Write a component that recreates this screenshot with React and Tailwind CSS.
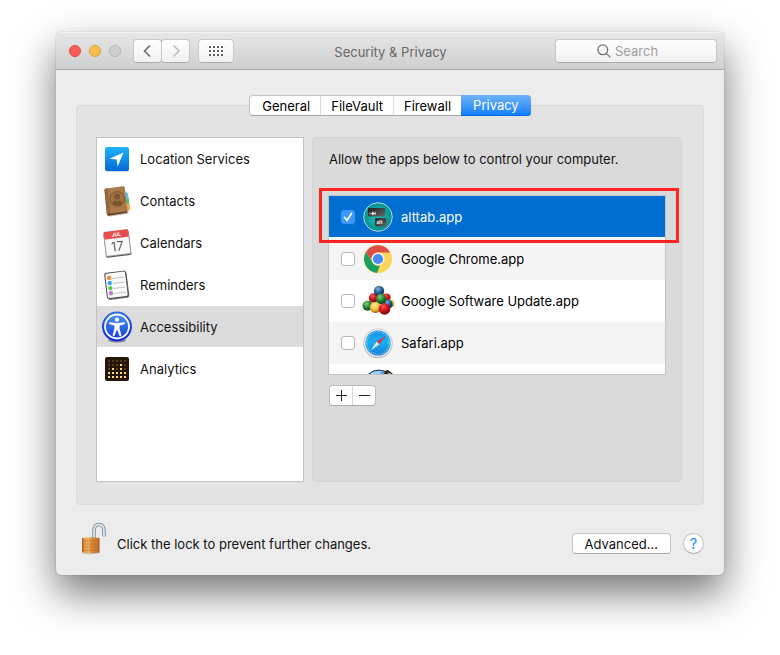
import React, { useState } from "react";

const LocationIcon = () => (
  <svg width="32" height="32" viewBox="0 0 32 32">
    <defs>
      <linearGradient id="loc" x1="0" y1="0" x2="0" y2="1">
        <stop offset="0" stopColor="#1fb4f7" />
        <stop offset="1" stopColor="#0468d8" />
      </linearGradient>
    </defs>
    <rect x="4" y="5" width="24" height="24" rx="2" fill="#000" opacity=".15" />
    <rect x="4" y="4" width="24" height="24" rx="2" fill="url(#loc)" />
    <path d="M22.500 9.500 8.500 15.800l7.200.7.900 7z" fill="#fff" />
  </svg>
);

const ContactsIcon = () => (
  <svg width="32" height="32" viewBox="0 0 32 32">
    <path d="M24 5.500 26.500 8l2.600 18-4 2z" fill="#e8e4dc" />
    <path d="M24.500 6.500l2.500 2 .5 4.500-3 .5z" fill="#5bb8e8" />
    <path d="M25 13.500l2.700-.5.700 5.500-3 .5z" fill="#4dbb7c" />
    <path d="M25.500 19l3-.5.600 6-3 1.500z" fill="#f0a840" />
    <path d="M7 30.500l20-3.200.500 1.200L9 31.500z" fill="#000" opacity=".3" />
    <path d="M3.500 5.500Q3 3.800 5 3.500L22 1.200q1.500-.2 1.700 1.200L26.500 26q.2 1.500-1.300 1.800L8 30.500q-1.800.3-2.200-1.500z" fill="#a9794a" />
    <path d="M3.500 5.500Q3 3.800 5 3.500l1.500-.3L9.500 30.200l-1.500.3q-1.800.3-2.200-1.500z" fill="#94673e" />
    <path d="M6.500 29l20-2.800q0 1.300-.8 1.600L8 30.500q-1 .2-1.500-1.500z" fill="#5d3c1d" />
    <circle cx="16.300" cy="14" r="7.300" fill="#a37345" stroke="#7d552f" strokeWidth="1" />
    <circle cx="16.200" cy="11.700" r="2.900" fill="#7d552f" />
    <path d="M10.800 18q1.200-2 3.700-2.500 1.700 1 3.400 0 2.800.2 4.100 1.700-2 3.600-5.700 3.600-3.500 0-5.500-2.800z" fill="#7d552f" />
  </svg>
);

const CalendarIcon = () => (
  <svg width="32" height="32" viewBox="0 0 32 32">
    <g transform="rotate(-7 16 16)">
      <rect x="3.500" y="5" width="25.500" height="24.500" rx="1.500" fill="#5c5c5c" />
      <rect x="4" y="4" width="24.500" height="24" rx="1" fill="#f9f9f9" stroke="#9a9a9a" strokeWidth=".6" />
      <rect x="4" y="3.500" width="24.500" height="7.500" rx="1" fill="#ea4b4d" />
      <text x="16.300" y="9.300" fontSize="5" fontWeight="700" fontFamily="Inter, sans-serif" fill="#fff" textAnchor="middle">JUL</text>
      <text x="16" y="24" fontSize="13" fontWeight="300" fontFamily="Inter, sans-serif" fill="#333" textAnchor="middle">17</text>
    </g>
  </svg>
);

const RemindersIcon = () => (
  <svg width="32" height="32" viewBox="0 0 32 32">
    <g transform="rotate(-7 16 16)">
      <rect x="5.500" y="4" width="21.500" height="26" rx="2" fill="#777" />
      <rect x="5" y="3" width="21" height="25.500" rx="2" fill="#fafafa" stroke="#4a4a4a" strokeWidth="1" />
      <path d="M12 9h12M12 14h12M12 19h12M12 24h12" stroke="#b9b9b9" strokeWidth=".8" />
      <circle cx="9" cy="8" r="2.200" fill="#f58a3c" />
      <circle cx="9" cy="13.200" r="2.200" fill="#28a8ee" />
      <circle cx="9" cy="18.400" r="2.200" fill="#5ccf5a" />
      <circle cx="9" cy="23.500" r="2.200" fill="#c07ad8" />
    </g>
  </svg>
);

const AccessibilityIcon = () => (
  <svg width="32" height="32" viewBox="0 0 32 32">
    <defs>
      <linearGradient id="acc" x1="0" y1="0" x2="0" y2="1">
        <stop offset="0" stopColor="#2f6fe0" />
        <stop offset="1" stopColor="#0b22d6" />
      </linearGradient>
      <linearGradient id="acc2" x1="0" y1="0" x2="0" y2="1">
        <stop offset="0" stopColor="#4b93f0" />
        <stop offset="1" stopColor="#1740dd" />
      </linearGradient>
    </defs>
    <ellipse cx="16" cy="29.500" rx="9" ry="2" fill="#000" opacity=".35" />
    <circle cx="16" cy="15.500" r="15" fill="url(#acc)" />
    <circle cx="16" cy="15.500" r="12" fill="url(#acc2)" stroke="#fff" strokeWidth="1.800" />
    <circle cx="16" cy="8.700" r="2.100" fill="#fff" />
    <path d="M9 11.300q7 1.400 14 0 1 .1 1 1 0 .7-.8.900L18.600 14.500v3.200l1.700 6.300q.1 1-.8 1.200-.8.100-1.100-.7L16.300 19h-.6l-2.100 5.500q-.3.800-1.100.7-.9-.2-.8-1.200l1.700-6.300v-3.200l-4.600-1.300q-.8-.2-.8-.9 0-.9 1-1z" fill="#fff" />
  </svg>
);

// lit dots per column, counted from the bottom
const LIT = [2, 3, 2, 4, 2];

const AnalyticsIcon = () => (
  <svg width="32" height="32" viewBox="0 0 32 32">
    <rect x="4" y="4" width="24" height="24" rx="2" fill="#231609" />
    {LIT.map((lit, c) =>
      [0, 1, 2, 3, 4].map((r) => (
        <rect key={`${c}-${r}`} x={7 + c * 4} y={7 + r * 4} width="2" height="2" fill={5 - r <= lit ? "#ffd872" : "#5b3a16"} />
      ))
    )}
  </svg>
);

const AltTabIcon = () => (
  <svg width="32" height="32" viewBox="0 0 32 32">
    <defs>
      <radialGradient id="alt">
        <stop offset="0" stopColor="#12c4bd" />
        <stop offset="1" stopColor="#0a8f8c" />
      </radialGradient>
      <linearGradient id="key" x1="0" y1="0" x2="1" y2="1">
        <stop offset="0" stopColor="#222" />
        <stop offset="1" stopColor="#666" />
      </linearGradient>
    </defs>
    <circle cx="16" cy="16" r="14.300" fill="url(#alt)" stroke="#b6dce6" strokeWidth="1" />
    <rect x="6" y="7" width="17" height="8.500" rx="1" fill="url(#key)" />
    <path d="M7.500 12.500h4M10.500 11.200l2.200 1.300-2.200 1.300zM13.300 11v3" stroke="#fff" strokeWidth=".7" fill="#fff" />
    <rect x="13" y="17" width="11.500" height="8.500" rx="1" fill="url(#key)" />
    <text x="17.500" y="22.500" fontSize="5" fontWeight="600" fontFamily="Inter, sans-serif" fill="#fff" textAnchor="middle">alt</text>
  </svg>
);

const ChromeIcon = () => (
  <svg width="32" height="32" viewBox="0 0 32 32">
    <circle cx="16" cy="16" r="14" fill="#fcd45a" />
    <path d="M3.900 9A14 14 0 0 1 28.200 9.500H16a6.500 6.500 0 0 0-5.900 9z" fill="#dd4f43" />
    <path d="M3.900 9l6.400 10.300A6.500 6.500 0 0 0 18 22.200L15 30A14 14 0 0 1 3.900 9z" fill="#1a9f5c" />
    <circle cx="16" cy="16" r="6.500" fill="#f5f5f5" />
    <circle cx="16" cy="16" r="5.100" fill="#4a8af4" />
  </svg>
);

const balls = [
  [24.500, 12.500, 4, "red"],
  [28, 18.500, 4, "yellow"],
  [26, 19, 4.500, "blue"],
  [11.500, 13, 4.700, "red"],
  [17, 6, 5.200, "blue"],
  [19, 14, 5.200, "green"],
  [5.500, 20.800, 5, "green"],
  [13.500, 22.500, 5.500, "yellow"],
  [22.500, 24, 5.800, "red"],
];

const SoftwareUpdateIcon = () => (
  <svg width="32" height="32" viewBox="0 0 32 32">
    <defs>
      <radialGradient id="red" cx=".4" cy=".3" r=".7"><stop offset="0" stopColor="#ff5a5a" /><stop offset=".5" stopColor="#d4141b" /><stop offset="1" stopColor="#6e0508" /></radialGradient>
      <radialGradient id="blue" cx=".4" cy=".3" r=".7"><stop offset="0" stopColor="#7ab4dc" /><stop offset=".5" stopColor="#28669a" /><stop offset="1" stopColor="#0b2a48" /></radialGradient>
      <radialGradient id="green" cx=".4" cy=".3" r=".7"><stop offset="0" stopColor="#83d083" /><stop offset=".5" stopColor="#2e8b36" /><stop offset="1" stopColor="#0d3d13" /></radialGradient>
      <radialGradient id="yellow" cx=".4" cy=".3" r=".7"><stop offset="0" stopColor="#ffec94" /><stop offset=".6" stopColor="#f2bd34" /><stop offset="1" stopColor="#9a6a10" /></radialGradient>
    </defs>
    {balls.map(([x, y, r, color], i) => (
      <circle key={i} cx={x} cy={y} r={r} fill={`url(#${color})`} />
    ))}
  </svg>
);

const SafariIcon = () => (
  <svg width="32" height="32" viewBox="0 0 32 32">
    <defs>
      <linearGradient id="saf" x1="0" y1="0" x2="0" y2="1">
        <stop offset="0" stopColor="#1c8fe8" />
        <stop offset=".5" stopColor="#18b0f0" />
        <stop offset="1" stopColor="#1679d8" />
      </linearGradient>
    </defs>
    <circle cx="16" cy="16.800" r="14.500" fill="#000" opacity=".25" />
    <circle cx="16" cy="16" r="14.300" fill="#efefef" stroke="#bbb" strokeWidth=".6" />
    <circle cx="16" cy="16" r="12.600" fill="url(#saf)" />
    <circle cx="16" cy="16" r="11.200" fill="none" stroke="#d6efff" strokeWidth="1.400" strokeDasharray=".7 1.300" opacity=".75" />
    <path d="M23.500 9 17.300 17.300 14.700 14.700z" fill="#e8302c" />
    <path d="M8.800 23.300 14.700 14.700l2.600 2.600z" fill="#f4f4f4" />
  </svg>
);

const GlobeIcon = () => (
  <svg width="32" height="32" viewBox="0 0 32 32">
    <circle cx="17" cy="17.500" r="15.500" fill="#57a9df" stroke="#1d3a55" strokeWidth="1" />
    <path d="M9 5q5-2.500 11-2l-3 4-6 1z" fill="#9ed2f2" />
    <path d="M22 6q1-4 4-4l5 4v5z" fill="#2b2119" />
    <path d="M25 4.500l4 1v4z" fill="#c9a678" />
  </svg>
);

const LockIcon = () => (
  <svg width="26" height="34" viewBox="0 0 26 34">
    <defs>
      <linearGradient id="lock" x1="0" y1="0" x2="1" y2="0">
        <stop offset="0" stopColor="#a9571a" />
        <stop offset=".15" stopColor="#e9a052" />
        <stop offset=".4" stopColor="#f0b062" />
        <stop offset=".55" stopColor="#d98a3e" />
        <stop offset=".9" stopColor="#c8762e" />
        <stop offset="1" stopColor="#94501a" />
      </linearGradient>
    </defs>
    <path d="M14 18V10.500q0-7 5-7t5 7.500v4.500" fill="none" stroke="#77848e" strokeWidth="3.400" />
    <path d="M14 18V10.500q0-7 5-7t5 7.500v4.500" fill="none" stroke="#dfe7ec" strokeWidth="1.800" />
    <path d="M3 32q8 2 16-1v1q-8 2-15.500.5z" fill="#000" opacity=".4" />
    <path d="M2 17q9-1.500 17.500 0v14.500q-9 1.500-17.500 0z" fill="url(#lock)" />
    <path d="M2.500 20h16.500M2.500 23h16.500M2.500 26h16.500M2.500 29h16.500" stroke="#a85f1e" strokeWidth=".8" opacity=".6" />
  </svg>
);

const services = [
  { name: "Location Services", Icon: LocationIcon },
  { name: "Contacts", Icon: ContactsIcon },
  { name: "Calendars", Icon: CalendarIcon },
  { name: "Reminders", Icon: RemindersIcon },
  { name: "Accessibility", Icon: AccessibilityIcon },
  { name: "Analytics", Icon: AnalyticsIcon },
];

const apps = [
  { name: "alttab.app", Icon: AltTabIcon },
  { name: "Google Chrome.app", Icon: ChromeIcon },
  { name: "Google Software Update.app", Icon: SoftwareUpdateIcon },
  { name: "Safari.app", Icon: SafariIcon },
];

const tabs = ["General", "FileVault", "Firewall", "Privacy"];

const toolButton = "h-6 flex items-center justify-center rounded bg-linear-to-b from-white to-[#f1f1f1] border border-[#c6c6c6] border-b-[#adadad]";

const TitleBar = () => (
  <header className="grid grid-cols-[1fr_auto_1fr] items-center h-[38px] pl-2 pr-[7px] rounded-t-[5px] bg-linear-to-b from-[#e7e7e7] to-[#cfcfcf] border-t border-t-[#f4f4f4] border-b border-b-[#a9a9a9]">
    <div className="flex items-center">
      <div className="flex gap-2 pl-[5px]">
        <button aria-label="Close" className="w-3 h-3 rounded-full bg-[#fc5b57] border border-[#df4744]" />
        <button aria-label="Minimize" className="w-3 h-3 rounded-full bg-[#fdbc4e] border border-[#de9f35]" />
        <button aria-label="Zoom" disabled className="w-3 h-3 rounded-full bg-[#cfcfcf] border border-[#b5b5b5]" />
      </div>
      <div className="flex ml-3">
        <button aria-label="Back" className={`w-[29px] ${toolButton}`}>
          <svg width="10" height="14" viewBox="0 0 10 14" fill="none" stroke="#6a6a6a" strokeWidth="1.600"><path d="M7 1.500 1.500 7 7 12.500" /></svg>
        </button>
        <button aria-label="Forward" disabled className={`w-[29px] -ml-px ${toolButton}`}>
          <svg width="10" height="14" viewBox="0 0 10 14" fill="none" stroke="#bdbdbd" strokeWidth="1.600"><path d="M2.500 1.500 8 7 2.500 12.500" /></svg>
        </button>
      </div>
      <button aria-label="Show All" className={`w-9 ml-2 ${toolButton}`}>
        <svg width="14" height="10" viewBox="0 0 14 10" fill="#5c5c5c">
          {[0, 4, 8].map((y) => [0, 4, 8, 12].map((x) => <rect key={`${x}-${y}`} x={x} y={y} width="2" height="2" />))}
        </svg>
      </button>
    </div>
    <h1 className="pt-0.5 text-[#666]">Security &amp; Privacy</h1>
    <label className={`w-[162px] justify-self-end gap-1 ${toolButton}`}>
      <svg width="14" height="14" viewBox="0 0 14 14" fill="none" stroke="#6e6e6e" strokeWidth="1.200">
        <circle cx="5.800" cy="5.800" r="4.900" />
        <path d="M9.300 9.300 13.300 13.300" />
      </svg>
      <input type="search" aria-label="Search" placeholder="Search" className="w-15 bg-transparent outline-none placeholder:text-[#a0a0a0]" />
    </label>
  </header>
);

const Tabs = ({ active, onChange }) => (
  <div className="relative flex justify-center">
    <div className="flex h-[21px] rounded bg-white border border-[#c4c4c4] border-b-[#a8a8a8]">
      {tabs.map((t) => (
        <button key={t} onClick={() => onChange(t)}
          className={t === active
            ? "-my-px -mr-px px-3 rounded-r bg-linear-to-b from-[#6cb3f7] to-[#0a7ffb] border-b border-[#0a6ae0] text-white"
            : "px-[10px] text-black border-l border-[#dcdcdc] first:border-l-0 first:pl-3"}>
          {t}
        </button>
      ))}
    </div>
  </div>
);

const Sidebar = ({ active, onChange }) => (
  <ul className="w-[208px] shrink-0 bg-white border border-[#c3c3c3]">
    {services.map(({ name, Icon }) => (
      <li key={name} className="h-[42px] pb-px">
        <button onClick={() => onChange(name)}
          className={`w-full h-full flex items-center gap-[7px] pl-1 text-[#111] ${name === active ? "bg-[#dcdcdc]" : ""}`}>
          <Icon />
          {name}
        </button>
      </li>
    ))}
  </ul>
);

const AppRow = ({ name, Icon, selected, checked, onCheck }) => (
  <li className={`h-[42px] ${selected ? "bg-white pb-px" : "odd:bg-white even:bg-[#f4f4f4]"}`}>
    <label className={`h-full flex items-center pl-3 ${selected ? "bg-[#006dd1] text-white" : "text-black"}`}>
      <span className="grid place-items-center">
        <input type="checkbox" checked={checked} onChange={onCheck}
          className="peer col-start-1 row-start-1 appearance-none w-[14px] h-[14px] rounded-[3px] bg-white border border-[#b5b5b5] checked:bg-[#3b99fc] checked:border-[#3b99fc]" />
        <svg width="10" height="10" viewBox="0 0 10 10" fill="none" stroke="#fff" strokeWidth="1.700" strokeLinecap="round"
          className="col-start-1 row-start-1 pointer-events-none invisible peer-checked:visible">
          <path d="M1.500 5.500 4 8.300 8.500 1.500" />
        </svg>
      </span>
      <span className="mx-[7px]"><Icon /></span>
      {name}
    </label>
  </li>
);

const App = () => {
  const [tab, setTab] = useState("Privacy");
  const [service, setService] = useState("Accessibility");
  const [checked, setChecked] = useState({ "alttab.app": true });

  const toggle = (name) => setChecked((c) => ({ ...c, [name]: !c[name] }));

  return (
    <div className="min-h-screen bg-white px-14 pt-8 pb-20 font-[Inter,'Liberation_Sans',sans-serif] text-[13px] leading-4">
      <div className="rounded-[5px] bg-[#ececec] shadow-[0_0_1px_rgba(0,0,0,0.5),0_18px_40px_rgba(0,0,0,0.55)]">
        <TitleBar />

        <main className="px-5 pt-[25px]">
          <Tabs active={tab} onChange={setTab} />

          {/* Group box, starts behind the tabs */}
          <section className="-mt-[11px] flex gap-2 pl-[19px] pr-[21px] pt-[31px] pb-[22px] rounded bg-[#e3e3e3] border border-[#d9d9d9]">
            <Sidebar active={service} onChange={setService} />

            <div className="flex-1 min-w-0 min-h-[345px] px-[15px] pt-[13px] rounded bg-[#dadada] border border-[#d4d4d4]">
              <p className="ml-px text-[#111]">Allow the apps below to control your computer.</p>
              <div className="relative mt-7">
                <ul className="h-[180px] overflow-hidden bg-white border border-[#c3c3c3]">
                  {apps.map(({ name, Icon }) => (
                    <AppRow key={name} name={name} Icon={Icon} selected={name === "alttab.app"}
                      checked={!!checked[name]} onCheck={() => toggle(name)} />
                  ))}
                  <li className="pl-[33px] pt-1" aria-hidden="true"><GlobeIcon /></li>
                </ul>
                <div className="absolute -top-[7px] -left-[9px] -right-[13px] h-[55px] border-3 border-[#ff2420] pointer-events-none" />
              </div>
              <div className="inline-flex mt-[10px] h-[21px] ml-px rounded bg-white border border-[#bdbdbd] border-b-[#a8a8a8]">
                <button aria-label="Add" className="w-[23px] flex items-center justify-center border-r border-[#d5d5d5]">
                  <svg width="11" height="11" stroke="#222" strokeWidth="1"><path d="M0 5.500h11M5.500 0v11" /></svg>
                </button>
                <button aria-label="Remove" className="w-[22px] flex items-center justify-center">
                  <svg width="11" height="11" stroke="#222" strokeWidth="1"><path d="M0 5.500h11" /></svg>
                </button>
              </div>
            </div>
          </section>
        </main>

        <footer className="flex items-end px-5 pt-4 pb-5">
          <button aria-label="Lock" className="ml-1 mr-[11px]"><LockIcon /></button>
          <p className="text-[#111] mb-[3px]">Click the lock to prevent further changes.</p>
          <button className="h-[21px] px-3 ml-auto mb-px rounded bg-white border border-[#c4c4c4] border-b-[#a8a8a8] text-[#111]">Advanced...</button>
          <button aria-label="Help" className="w-[21px] h-[21px] ml-3 mb-px rounded-full bg-white border border-[#c4c4c4] border-b-[#a8a8a8] text-[#0a7ffb] text-[14px] leading-4">?</button>
        </footer>
      </div>
    </div>
  );
};

export default App;
